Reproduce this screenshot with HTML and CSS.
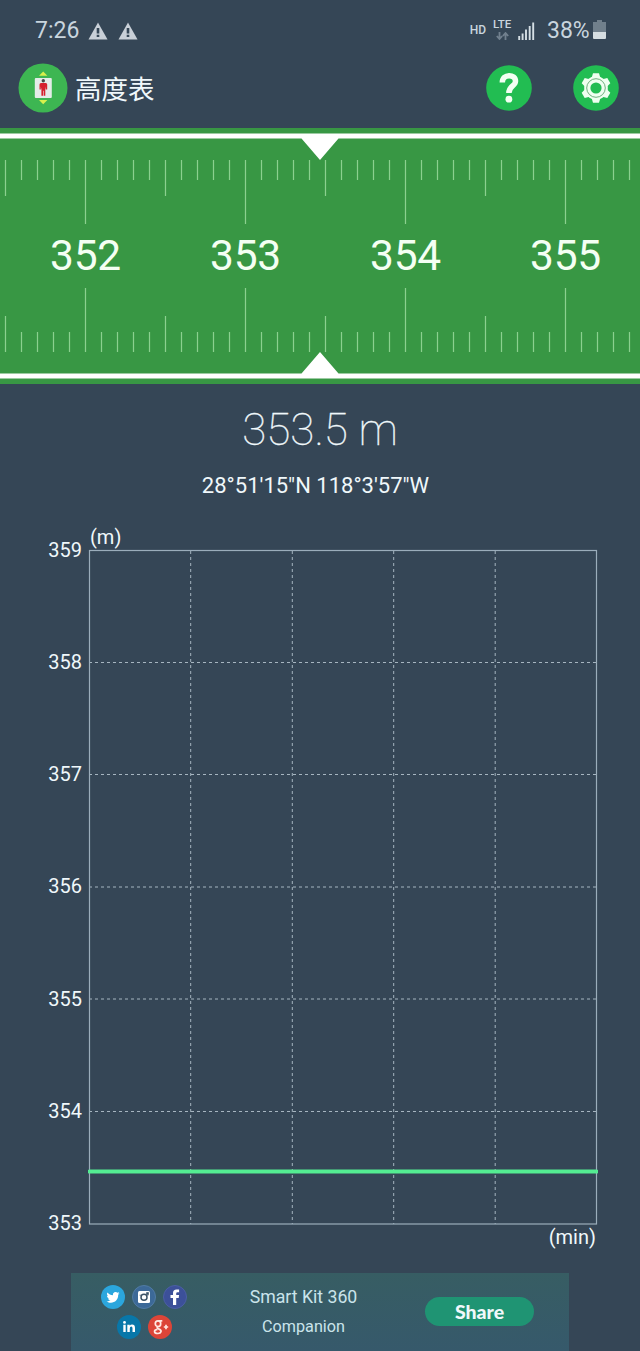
FILE: index.html
```html
<!DOCTYPE html>
<html lang="zh-CN">
<head>
<meta charset="utf-8">
<title>高度表</title>
<link rel="stylesheet" href="styles.css">
</head>
<body>
<div class="app">
  <div class="status">
    <span class="clock">7:26</span>
    <svg class="warn" viewBox="0 0 20 18"><path d="M10 0.5 19.5 17.5H.5z"/><path class="mark" d="M8.7 6h2.6v5.5H8.7zM8.7 12.7h2.6v2.3H8.7z"/></svg>
    <svg class="warn" viewBox="0 0 20 18"><path d="M10 0.5 19.5 17.5H.5z"/><path class="mark" d="M8.7 6h2.6v5.5H8.7zM8.7 12.7h2.6v2.3H8.7z"/></svg>
    <span class="hd">HD</span>
    <span class="lte">LTE
      <svg class="arrows" viewBox="0 0 13 8"><path d="M3.5 0v7M.8 4l2.7 3 2.7-3M9.5 8V1M6.8 4l2.7-3 2.7 3"/></svg>
    </span>
    <svg class="signal" viewBox="0 0 17 18"><path d="M1.2 18v-4M4.6 18v-6.5M8 18V7.500M11.700 18V4M15.200 18V.5"/></svg>
    <span class="percent">38%</span>
    <svg class="battery" viewBox="0 0 13 19"><path class="empty" d="M4 0h5v2h4v10H0V2h4z"/><path class="full" d="M0 12h13v6q0 1-1 1H1q-1 0-1-1z"/></svg>
  </div>

  <header class="header">
    <svg class="logo" viewBox="0 0 50 50">
      <circle cx="25" cy="25" r="24.500" fill="#3db652"/>
      <path d="M21 12.800l4.200-4.300 4.200 4.300zM21 37l4.200 4.300 4.200-4.300z" fill="#d7f04c"/>
      <rect x="16.800" y="15" width="17" height="20" rx="1" fill="#e4ece8"/>
      <circle cx="25.300" cy="17.700" r="1.700" fill="#454c48"/>
      <path d="M23 20h4.800q1.400 0 1.400 1.600v5h-1.400v-3l-.5 3v6.200h-1.600v-5h-.6v5h-1.700v-6.200l-.6-3v3h-1.300v-5q0-1.600 1.500-1.600z" fill="#d5202d"/>
    </svg>
    <h1 class="title">高度表</h1>
    <svg class="round help" viewBox="0 0 46 46">
      <circle cx="23" cy="23" r="22.800" fill="#22bd52"/>
      <path d="M16.300 17.500C16.400 8.300 29.700 8.800 29.500 16.300C29.400 21.300 22.900 20.700 22.900 27.900" fill="none" stroke="#f3fff3" stroke-width="5.500"/>
      <circle cx="22.900" cy="34.200" r="3.400" fill="#f3fff3"/>
    </svg>
    <svg class="round" viewBox="0 0 46 46">
      <circle cx="23" cy="23" r="22.800" fill="#22bd52"/>
      <g fill="#effff0">
        <circle cx="23" cy="23" r="11.800"/>
        <path id="tooth" d="M18.600 13 20 8.200h6l1.400 4.800v20L26 37.800h-6L18.600 33z"/>
        <use href="#tooth" transform="rotate(60 23 23)"/>
        <use href="#tooth" transform="rotate(120 23 23)"/>
      </g>
      <circle cx="23" cy="23" r="9.300" fill="none" stroke="#4f9a60" stroke-width=".8"/>
      <circle cx="23" cy="23" r="5.600" fill="#22bd52"/>
    </svg>
  </header>

  <svg class="ruler" viewBox="0 0 640 256">
    <defs>
      <pattern id="ticks" x="-3" y="0" width="160" height="256" patternUnits="userSpaceOnUse">
        <path class="tick" d="M8.500 32v36M24.500 32v20M40.500 32v20M56.500 32v20M72.500 32v20M88.500 32v64M104.500 32v20M120.500 32v20M136.500 32v20M152.500 32v20M8.500 224v-36M24.500 224v-20M40.500 224v-20M56.500 224v-20M72.500 224v-20M88.500 224v-64M104.500 224v-20M120.500 224v-20M136.500 224v-20M152.500 224v-20"/>
      </pattern>
    </defs>
    <rect width="640" height="256" fill="#389744"/>
    <rect width="640" height="256" fill="url(#ticks)"/>
    <path d="M0 5.500h640v5H338.500L320 32 301.500 10.500H0zM0 250.500h640v-5H338.500L320 224l-18.500 21.500H0z" fill="#fff"/>
    <g class="marks">
      <text x="85.500" y="142">352</text>
      <text x="245.500" y="142">353</text>
      <text x="405.500" y="142">354</text>
      <text x="565.500" y="142">355</text>
    </g>
  </svg>

  <div class="altitude">353.5 m</div>
  <div class="coords">28°51'15"N 118°3'57"W</div>

  <section class="chart">
    <div class="unit-y">(m)</div>
    <div class="plot">
      <div class="scale"><span>359</span><span>358</span><span>357</span><span>356</span><span>355</span><span>354</span><span>353</span></div>
      <svg class="graph" viewBox="0 0 510 676">
        <path class="grid" d="M1 113.500h508M1 225.500h508M1 338h508M1 450h508M1 562.500h508M102.700 2v673M204.300 2v673M305.700 2v673M407.200 2v673"/>
        <rect class="frame" x="1.500" y="1.500" width="507" height="673.500"/>
        <path class="line" d="M1.500 622.500h507"/>
      </svg>
    </div>
    <div class="unit-x">(min)</div>
  </section>

  <footer class="banner">
    <div class="social">
      <svg viewBox="0 0 24 24"><circle cx="12" cy="12" r="12" fill="#2ba6dd"/><path fill="#fff" d="M18.500 8.200c-.5.200-1 .4-1.500.4.500-.3 1-.9 1.200-1.500l-1.700.7a2.700 2.700 0 0 0-4.600 2.400c-2.200-.1-4.200-1.200-5.500-2.800-.7 1.300-.4 2.800.8 3.600-.4 0-.8-.1-1.200-.3 0 1.300.9 2.400 2.200 2.700-.4.100-.8.100-1.200 0 .3 1.100 1.300 1.800 2.500 1.900a5.400 5.400 0 0 1-4 1.100c5.800 3.600 11.900-.4 11.700-6.600.5-.4 1-1 1.300-1.600z"/></svg>
      <svg viewBox="0 0 24 24"><circle cx="12" cy="12" r="11.500" fill="#3c6998" stroke="#517ba3"/><rect x="6" y="6" width="12" height="12" rx="1.500" fill="#fff"/><circle cx="12" cy="12.300" r="3" fill="#fff" stroke="#3b5266" stroke-width="1.500"/><path d="M14.500 7.500h2v2h-2zM7.500 10.200h2M14.500 10.200h2" fill="#3b5266" stroke="#3b5266" stroke-width=".6"/></svg>
      <svg viewBox="0 0 24 24"><circle cx="12" cy="12" r="11.500" fill="#3c5099" stroke="#4b5fa3"/><path fill="#fff" d="M10 20v-7H7.500v-3H10V8q0-3.600 3.600-3.600h2.500v2.900h-1.600q-1.300 0-1.300 1.200V10h2.900l-.4 3h-2.500v7z"/></svg>
      <svg viewBox="0 0 24 24"><circle cx="12" cy="12" r="12" fill="#0877a9"/><path fill="#fff" d="M6.300 9.700h2.400V17H6.300zM10.300 9.700h2.400v1q.8-1.200 2.400-1.200 2.900 0 2.900 3.400V17h-2.500v-3.700q0-1.700-1.200-1.700-1.500 0-1.500 1.800V17h-2.500z"/><circle cx="7.500" cy="7.400" r="1.400" fill="#fff"/></svg>
      <svg viewBox="0 0 24 24"><circle cx="12" cy="12" r="12" fill="#dc4538"/><g fill="none" stroke="#ffe9e3" stroke-width="1.700"><ellipse cx="10" cy="8.700" rx="2.700" ry="2.900"/><path d="M10.500 5.800h3.800M10 11.800q-2 1.100.6 2.100c4 1.500 2.700 4.700-.9 4.600-4 0-4.300-3.500-.3-4.100M15.800 12h4.400M18 9.800v4.400"/></g></svg>
    </div>
    <div class="caption"><span>Smart Kit 360</span><span class="sub">Companion</span></div>
    <div class="share">Share</div>
  </footer>
</div>
</body>
</html>
```

FILE: styles.css
```css
* { box-sizing: border-box; }
body { margin: 0; background: #354656; }
.app {
  width: 640px; height: 1351px; overflow: hidden;
  display: flex; flex-direction: column;
  background: #354656; color: #f0f8fb;
  font-family: Roboto, "Noto Sans CJK SC", sans-serif;
}
svg { display: block; flex: none; }

.status { height: 60px; display: flex; align-items: center; padding: 2px 34px 0 35px; color: #c9d5de; flex: none; }
.clock { font-size: 23px; line-height: 28px; width: 53px; white-space: nowrap; }
.warn { width: 20px; height: 18px; margin-right: 10px; fill: #c9d0d8; }
.warn .mark { fill: #354656; }
.hd { margin: -3px 7px 0 auto; font-size: 12px; font-weight: 500; line-height: 14px; }
.lte { width: 20px; margin-top: -3px; font-size: 11.500px; font-weight: 500; line-height: 11px; }
.arrows { width: 13px; height: 8px; margin: 2px 0 0 3px; fill: none; stroke: #71808e; stroke-width: 1.800; }
.signal { width: 17px; height: 18px; margin: -1px 12px 0 5px; stroke: #d5dfe5; stroke-width: 1.900; }
.percent { font-size: 23px; line-height: 28px; width: 42px; margin-right: 4px; white-space: nowrap; }
.battery { width: 13px; height: 19px; margin-top: -3px; }
.battery .empty { fill: #71808c; }
.battery .full { fill: #d5dde1; }

.header { height: 68px; flex: none; display: flex; align-items: center; padding: 0 21px 12px 18px; }
.logo { width: 50px; height: 50px; }
.title { margin: 0 auto 0 7px; font-size: 26.500px; line-height: 36px; font-weight: 400; font-family: "Noto Sans CJK SC", sans-serif; }
.round { width: 46px; height: 46px; }
.help { margin-right: 41.500px; }

.ruler { width: 640px; height: 256px; }
.tick { stroke: #8bd08f; stroke-width: 1.200; }
.marks { font-size: 42.500px; fill: #f4fff3; text-anchor: middle; letter-spacing: -.3px; }

.altitude { height: 80px; padding-top: 19px; flex: none; text-align: center; font-size: 44px; line-height: 54px; font-weight: 100; -webkit-text-stroke: .3px #f0f8fb; }
.coords { height: 46px; padding-top: 8px; margin-right: 9px; flex: none; text-align: center; font-size: 22px; line-height: 28px; white-space: nowrap; }

.chart { height: 763px; flex: none; padding-top: 14.500px; font-size: 20px; line-height: 24px; }
.unit-y { height: 24px; padding-left: 90px; }
.plot { display: flex; height: 676.500px; }
.scale { width: 82px; height: 698px; margin: -11px 6px 0 0; display: flex; flex-direction: column; justify-content: space-between; text-align: right; }
.graph { width: 510px; height: 676px; }
.grid { stroke: #a6b5c0; stroke-width: 1; stroke-dasharray: 3 3; }
.frame { fill: none; stroke: #9badbb; stroke-width: 1.200; }
.line { stroke: #54ec92; stroke-width: 4; stroke-linecap: round; }
.unit-x { text-align: right; padding-right: 44px; }

.banner { width: 498px; height: 78px; margin-left: 71px; display: flex; background: linear-gradient(#375d63, #36596b); flex: none; }
.social { width: 146px; padding: 12px 15px 0; display: flex; flex-wrap: wrap; justify-content: center; align-content: flex-start; gap: 6px 7px; }
.social svg { width: 24px; height: 24px; }
.caption { width: 173px; padding-top: 9px; display: flex; flex-direction: column; align-items: center; font-size: 17.700px; line-height: 30px; color: #cae4eb; }
.sub { font-size: 16.200px; }
.share { width: 109px; height: 29px; margin: 24px 0 0 35px; border-radius: 15px; background: #1f9473; font: 900 19.500px/29px Lato, sans-serif; text-align: center; }
```
